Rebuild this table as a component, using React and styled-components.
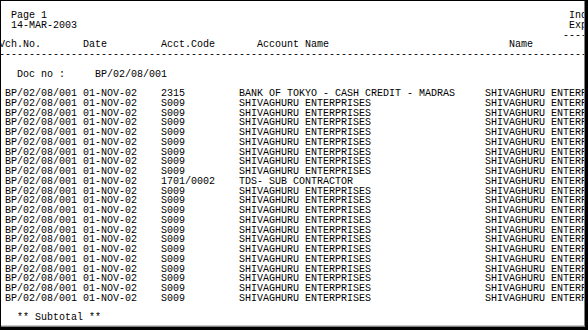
import React from 'react';
import styled, { createGlobalStyle } from 'styled-components';

const GlobalStyle = createGlobalStyle`
  html, body {
    margin: 0;
    padding: 0;
    background: #fff;
  }
`;

const CHAR = 6;
const LINE = 9.75;

const Frame = styled.div`
  box-sizing: border-box;
  width: 588px;
  height: 330px;
  border-top: 1px solid #000;
  border-left: 1px solid #000;
  border-right: 3px solid #000;
  border-bottom: 3px solid #000;
  background: #fff;
`;

const Bevel = styled.div`
  box-sizing: border-box;
  height: 100%;
  border-right: 1px solid #808080;
  border-bottom: 1px solid #808080;
`;

const Sheet = styled.div`
  box-sizing: border-box;
  height: 100%;
  overflow: hidden;
  border-bottom: 1px solid #c8c8c8;
  padding: 10px 0 0 4px;
  font-family: 'Liberation Mono', 'Courier New', monospace;
  font-size: 10px;
  line-height: ${LINE}px;
  color: #000;
`;

const Line = styled.div`
  height: ${LINE}px;
  white-space: pre;
  padding-left: ${(p) => (p.$indent || 0) * CHAR}px;
`;

const TopBar = styled.div`
  display: grid;
  grid-template-columns: ${93 * CHAR}px auto;
`;

const Grid = styled.div`
  display: grid;
  grid-template-columns: ${(p) => p.$cols.map((c) => `${c * CHAR}px`).join(' ')} max-content;
  height: ${LINE}px;
  white-space: pre;
  margin-left: ${(p) => (p.$shift || 0) * CHAR}px;
`;

const Rule = styled.div`
  height: ${LINE}px;
  white-space: pre;
  margin-left: -${CHAR}px;
`;

const Spacer = styled.div`
  height: ${LINE}px;
`;

const rows = [
  { code: '2315', account: 'BANK OF TOKYO - CASH CREDIT - MADRAS' },
  ...Array.from({ length: 8 }, () => ({ code: 'S009', account: 'SHIVAGHURU ENTERPRISES' })),
  { code: '1701/0002', account: 'TDS- SUB CONTRACTOR' },
  ...Array.from({ length: 12 }, () => ({ code: 'S009', account: 'SHIVAGHURU ENTERPRISES' })),
];

const App = () => {
  return (
    <>
      <GlobalStyle />
      <Frame>
        <Bevel>
          <Sheet>
            <TopBar>
              <div>
                <Line $indent={1}>Page 1</Line>
                <Line $indent={1}>14-MAR-2003</Line>
              </div>
              <div>
                <Line $indent={1}>Ind</Line>
                <Line $indent={1}>Exp</Line>
                <Line>----------</Line>
              </div>
            </TopBar>
            <Grid $cols={[14, 13, 16, 42]} $shift={-1}>
              <span>Vch.No.</span>
              <span>Date</span>
              <span>Acct.Code</span>
              <span>Account Name</span>
              <span>Name</span>
            </Grid>
            <Rule>{'-'.repeat(110)}</Rule>
            <Spacer />
            <Grid $cols={[13]} $shift={2}>
              <span>Doc no :</span>
              <span>BP/02/08/001</span>
            </Grid>
            <Spacer />
            {rows.map((r, i) => (
              <Grid key={i} $cols={[13, 13, 13, 41]}>
                <span>BP/02/08/001</span>
                <span>01-NOV-02</span>
                <span>{r.code}</span>
                <span>{r.account}</span>
                <span>SHIVAGHURU ENTERPRISES</span>
              </Grid>
            ))}
            <Spacer />
            <Line $indent={2}>** Subtotal **</Line>
          </Sheet>
        </Bevel>
      </Frame>
    </>
  );
};

export default App;
